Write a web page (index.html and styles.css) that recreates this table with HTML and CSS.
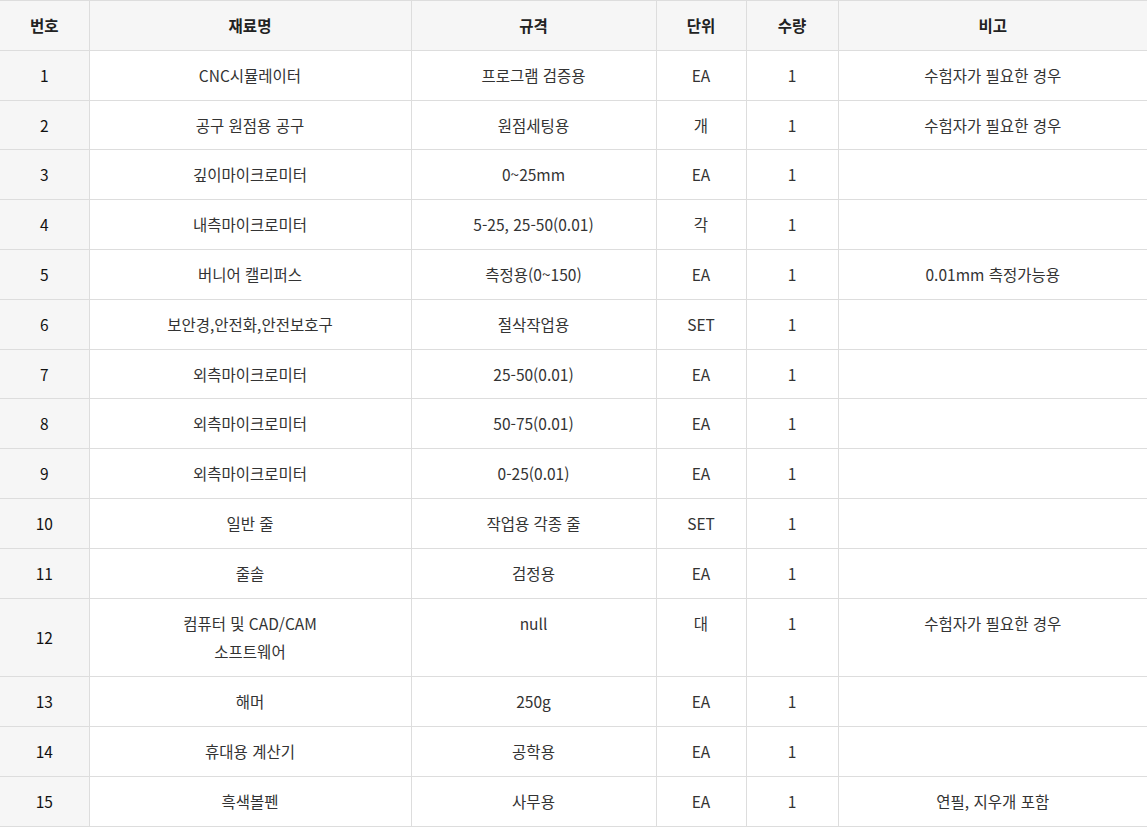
FILE: index.html
```html
<!DOCTYPE html>
<html lang="ko">
<head>
<meta charset="utf-8">
<link rel="stylesheet" href="styles.css">
</head>
<body>
<table class="mat">
  <colgroup>
    <col class="c-no"><col class="c-name"><col class="c-spec"><col class="c-unit"><col class="c-qty"><col class="c-note">
  </colgroup>
  <thead>
    <tr><th>번호</th><th>재료명</th><th>규격</th><th>단위</th><th>수량</th><th>비고</th></tr>
  </thead>
  <tbody>
    <tr><th>1</th><td>CNC시뮬레이터</td><td>프로그램 검증용</td><td>EA</td><td>1</td><td>수험자가 필요한 경우</td></tr>
    <tr><th>2</th><td>공구 원점용 공구</td><td>원점세팅용</td><td>개</td><td>1</td><td>수험자가 필요한 경우</td></tr>
    <tr><th>3</th><td>깊이마이크로미터</td><td>0~25mm</td><td>EA</td><td>1</td><td></td></tr>
    <tr><th>4</th><td>내측마이크로미터</td><td>5-25, 25-50(0.01)</td><td>각</td><td>1</td><td></td></tr>
    <tr><th>5</th><td>버니어 캘리퍼스</td><td>측정용(0~150)</td><td>EA</td><td>1</td><td>0.01mm 측정가능용</td></tr>
    <tr><th>6</th><td>보안경,안전화,안전보호구</td><td>절삭작업용</td><td>SET</td><td>1</td><td></td></tr>
    <tr><th>7</th><td>외측마이크로미터</td><td>25-50(0.01)</td><td>EA</td><td>1</td><td></td></tr>
    <tr><th>8</th><td>외측마이크로미터</td><td>50-75(0.01)</td><td>EA</td><td>1</td><td></td></tr>
    <tr><th>9</th><td>외측마이크로미터</td><td>0-25(0.01)</td><td>EA</td><td>1</td><td></td></tr>
    <tr><th>10</th><td>일반 줄</td><td>작업용 각종 줄</td><td>SET</td><td>1</td><td></td></tr>
    <tr><th>11</th><td>줄솔</td><td>검정용</td><td>EA</td><td>1</td><td></td></tr>
    <tr><th>12</th><td>컴퓨터 및 CAD/CAM<br>소프트웨어</td><td>null</td><td>대</td><td>1</td><td>수험자가 필요한 경우</td></tr>
    <tr><th>13</th><td>해머</td><td>250g</td><td>EA</td><td>1</td><td></td></tr>
    <tr><th>14</th><td>휴대용 계산기</td><td>공학용</td><td>EA</td><td>1</td><td></td></tr>
    <tr><th>15</th><td>흑색볼펜</td><td>사무용</td><td>EA</td><td>1</td><td>연필, 지우개 포함</td></tr>
  </tbody>
</table>
</body>
</html>
```

FILE: styles.css
```css
html, body {
  margin: 0;
  padding: 0;
  background: #fff;
}

body {
  font-family: "Noto Sans CJK KR", "Noto Sans", sans-serif;
  font-size: 15.5px;
  color: #333;
}

.mat {
  width: 1147px;
  border-collapse: collapse;
  table-layout: fixed;
  border-top: 1px solid #ddd;
}

.c-no { width: 89px; }
.c-name { width: 322px; }
.c-spec { width: 245px; }
.c-unit { width: 90px; }
.c-qty { width: 92px; }
.c-note { width: 309px; }

.mat th,
.mat td {
  padding: 10px 8px;
  line-height: 28.8px;
  text-align: center;
  border-bottom: 1px solid #ddd;
  border-left: 1px solid #ddd;
}

.mat tr > :first-child {
  border-left: none;
}

.mat td {
  vertical-align: top;
  color: #333;
}

.mat thead th {
  background: #f6f6f6;
  font-weight: 700;
  color: #222;
  vertical-align: middle;
}

.mat tbody th {
  background: #f6f6f6;
  font-weight: 400;
  color: #111;
  vertical-align: middle;
}
```
